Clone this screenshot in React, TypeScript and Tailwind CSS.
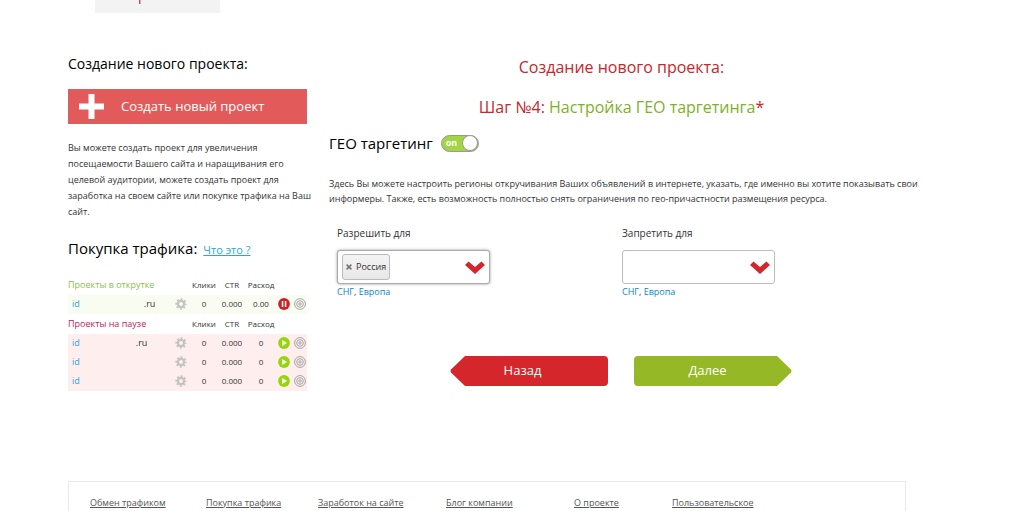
import { useState } from 'react';

type Project = { id: number; domain: string; domainClass: string; clicks: string; ctr: string; spend: string };

const ACTIVE: Project[] = [
  { id: 1, domain: '.ru', domainClass: 'pl-16', clicks: '0', ctr: '0.000', spend: '0.00' },
];

const PAUSED: Project[] = [
  { id: 2, domain: '.ru', domainClass: 'pl-14', clicks: '0', ctr: '0.000', spend: '0' },
  { id: 3, domain: '', domainClass: '', clicks: '0', ctr: '0.000', spend: '0' },
  { id: 4, domain: '', domainClass: '', clicks: '0', ctr: '0.000', spend: '0' },
];

const REGIONS = ['Россия', 'СНГ', 'Европа'];

const FOOTER_LINKS = [
  { label: 'Обмен трафиком', width: 'w-[116px]' },
  { label: 'Покупка трафика', width: 'w-[112px]' },
  { label: 'Заработок на сайте', width: 'w-32' },
  { label: 'Блог компании', width: 'w-32' },
  { label: 'О проекте', width: 'w-[98px]' },
  { label: 'Пользовательское', width: '' },
];

function GearIcon() {
  return (
    <svg viewBox="0 0 12 12" className="size-3" aria-hidden="true">
      <circle cx="6" cy="6" r="3.1" fill="none" stroke="#c3c3c3" strokeWidth="2.2" />
      <circle cx="6" cy="6" r="4.8" fill="none" stroke="#c3c3c3" strokeWidth="1.8" strokeDasharray="1.9 1.87" strokeDashoffset="0.95" />
    </svg>
  );
}

function PauseIcon() {
  return (
    <svg viewBox="0 0 12 12" className="size-3" aria-hidden="true">
      <circle cx="6" cy="6" r="5.9" fill="#cf2029" />
      <path d="M3.8 3h1.5v6H3.8zM6.8 3h1.5v6H6.8z" fill="#fff" />
    </svg>
  );
}

function PlayIcon() {
  return (
    <svg viewBox="0 0 12 12" className="size-3" aria-hidden="true">
      <circle cx="6" cy="6" r="5.9" fill="#94d60a" />
      <path d="M4.2 3 9 6 4.2 9z" fill="#fff" />
    </svg>
  );
}

function TargetIcon() {
  return (
    <svg viewBox="0 0 12 12" className="size-3" fill="none" stroke="#a3a3a3" aria-hidden="true">
      <circle cx="6" cy="6" r="5.4" />
      <circle cx="6" cy="6" r="3.3" />
      <circle cx="6" cy="6" r="1.2" />
    </svg>
  );
}

function ProjectRows({ title, titleClass, rowClass, rows, paused }: { title: string; titleClass: string; rowClass: string; rows: Project[]; paused?: boolean }) {
  return (
    <tbody>
      <tr className="h-5 text-[8px] text-[#333]">
        <th scope="colgroup" className={`text-left text-[9px] font-normal whitespace-nowrap ${titleClass}`}>{title}</th>
        <td />
        <th scope="col" className="font-normal">Клики</th>
        <th scope="col" className="font-normal">CTR</th>
        <th scope="col" className="font-normal">Расход</th>
        <td />
        <td />
      </tr>
      {rows.map((row) => (
        <tr key={row.id} className={`h-[19px] text-center text-[8px] text-[#333] ${rowClass}`}>
          <td className="pl-1 text-left text-[9px]">
            <a href="#project" className="text-[#2aa5dc]">id</a>
            <span className={row.domainClass}>{row.domain}</span>
          </td>
          <td>
            <button type="button" aria-label="Настройки" className="mx-auto block"><GearIcon /></button>
          </td>
          <td>{row.clicks}</td>
          <td>{row.ctr}</td>
          <td>{row.spend}</td>
          <td>
            <button type="button" aria-label={paused ? 'Запустить' : 'Пауза'} className="mx-auto block">{paused ? <PlayIcon /> : <PauseIcon />}</button>
          </td>
          <td>
            <button type="button" aria-label="Таргетинг" className="mx-auto block"><TargetIcon /></button>
          </td>
        </tr>
      ))}
    </tbody>
  );
}

function RegionPicker({ id, label, initial, active }: { id: string; label: string; initial: string[]; active?: boolean }) {
  const [selected, setSelected] = useState(initial);

  const add = (name: string) => {
    if (name && !selected.includes(name)) setSelected([...selected, name]);
  };

  return (
    <div className="w-[153px] text-[9px]">
      <label htmlFor={id} className="block text-[10px] leading-4 text-[#333]">{label}</label>
      <div className={`mt-[9px] flex h-[34px] items-center rounded-[3px] border bg-white pr-1 pl-1 ${active ? 'border-[#aaa] shadow-[0_0_3px_#999]' : 'border-[#bbb]'}`}>
        {selected.map((name) => (
          <span key={name} className="flex h-[26px] items-center gap-1 rounded-[3px] border border-[#bbb] bg-linear-to-b from-[#f4f4f4] to-[#e8e8e8] px-[3px] text-[#333]">
            <button type="button" aria-label={`Убрать ${name}`} onClick={() => setSelected(selected.filter((item) => item !== name))}>
              <svg viewBox="0 0 6 6" className="size-[6px]" stroke="#777" strokeWidth="1.6" aria-hidden="true"><path d="M.6.6l4.8 4.8M5.4.6L.6 5.4" /></svg>
            </button>
            {name}
          </span>
        ))}
        <select id={id} value="" onChange={(e) => add(e.target.value)} className="h-full min-w-0 flex-1 appearance-none bg-transparent outline-none">
          <option value="" />
          {REGIONS.map((name) => <option key={name}>{name}</option>)}
        </select>
        <svg viewBox="0 0 20 13" className="h-[13px] w-5 shrink-0" aria-hidden="true">
          <path d="M3.5 0.5 10 6l6.5-5.5L20 4 10 13 0 4z" fill="#d3262b" />
        </svg>
      </div>
      <p className="leading-4 text-[#333]">
        <button type="button" onClick={() => add('СНГ')} className="text-[#0b86cf]">СНГ</button>,{' '}
        <button type="button" onClick={() => add('Европа')} className="text-[#0b86cf]">Европа</button>
      </p>
    </div>
  );
}

export default function App() {
  const [geo, setGeo] = useState(true);

  return (
    <div className="bg-white pr-[110px] pl-[68px] font-['Open_Sans','Noto_Sans',sans-serif] text-[#333]">
      <nav className="flex h-[13px] items-end overflow-hidden pl-[27px]">
        <a href="#projects" className="w-[125px] bg-[#f3f3f3] pb-[8px] text-center text-sm leading-5 text-[#c2185b]">Проекты</a>
      </nav>

      <div className="flex gap-[22px] pt-10">
        <aside className="w-[239px] shrink-0">
          <h2 className="text-sm leading-[22px] text-black">Создание нового проекта:</h2>
          <button type="button" className="mt-[14px] flex h-[35px] w-full items-center border border-[#c66] bg-[#e25b5a] pl-[10px] text-[13px] text-white">
            <svg viewBox="0 0 25 25" className="size-[25px]" aria-hidden="true"><path d="M9.5 0h6v9.5H25v6h-9.5V25h-6v-9.5H0v-6h9.5z" fill="#fff" /></svg>
            <span className="pl-[17px]">Создать новый проект</span>
          </button>
          <p className="-mr-3 mt-4 text-[9px] leading-[16px]">
            Вы можете создать проект для увеличения<br />
            посещаемости Вашего сайта и наращивания его<br />
            целевой аудитории, можете создать проект для<br />
            заработка на своем сайте или покупке трафика на Ваш<br />
            сайт.
          </p>
          <div className="mt-[18px] flex items-baseline gap-[6px]">
            <h2 className="text-[15px] leading-5 text-black">Покупка трафика:</h2>
            <a href="#help" className="text-[11px] text-[#2aa5dc] underline">Что это ?</a>
          </div>
          <table className="mt-4 w-full table-fixed">
            <colgroup>
              <col className="w-[104px]" />
              <col className="w-[18px]" />
              <col className="w-7" />
              <col className="w-7" />
              <col className="w-[30px]" />
              <col className="w-4" />
              <col className="w-[15px]" />
            </colgroup>
            <ProjectRows title="Проекты в открутке" titleClass="text-[#8bbf45]" rowClass="bg-[#f9fdf1]" rows={ACTIVE} />
            <ProjectRows title="Проекты на паузе" titleClass="text-[#c2185b]" rowClass="bg-[#ffeeee]" rows={PAUSED} paused />
          </table>
        </aside>

        <main className="min-w-0 flex-1">
          <h1 className="mt-0.5 text-center text-base leading-6 text-[#c9252b]">Создание нового проекта:</h1>
          <h2 className="mt-4 text-center text-base leading-6 text-[#7fb02a]">
            <span className="text-[#c9252b]">Шаг №4:</span> Настройка ГЕО таргетинга<span className="text-[#c9252b]">*</span>
          </h2>
          <label className="mt-3 flex items-center gap-2 text-[15px] leading-6 text-black">
            ГЕО таргетинг
            <input type="checkbox" checked={geo} onChange={(e) => setGeo(e.target.checked)} className="peer sr-only" />
            <span className="flex h-[17px] w-[38px] items-center justify-between rounded-full border border-[#999] bg-[#a3d444] pl-1 text-[9px] font-bold text-white">
              {geo ? 'on' : 'off'}
              <span className="size-4 rounded-full border border-[#999] bg-white" />
            </span>
          </label>
          <p className="-mr-3 mt-[21px] text-[9px] leading-[15px]">
            Здесь Вы можете настроить регионы откручивания Ваших объявлений в интернете, указать, где именно вы хотите показывать свои информеры. Также, есть возможность полностью снять ограничения по гео-причастности размещения ресурса.
          </p>
          <div className="mt-[19px] flex gap-[132px] pl-2">
            <RegionPicker id="allow" label="Разрешить для" initial={['Россия']} active />
            <RegionPicker id="deny" label="Запретить для" initial={[]} />
          </div>
          <div className="mt-14 flex gap-[26px] pl-[121px] text-[13px] text-white">
            <button type="button" className="flex h-[30px] w-[158px]">
              <svg viewBox="0 0 15 30" className="h-[30px] w-[15px]" aria-hidden="true"><path d="M15 0 1 13.5q-1 1.5 0 3L15 30z" fill="#d5272b" /></svg>
              <span className="flex h-full flex-1 items-center justify-center rounded-r-[4px] bg-[#d5272b] pr-7">Назад</span>
            </button>
            <button type="button" className="flex h-[30px] w-[158px]">
              <span className="flex h-full flex-1 items-center justify-center rounded-l-[4px] bg-[#95b926] pl-1">Далее</span>
              <svg viewBox="0 0 15 30" className="h-[30px] w-[15px]" aria-hidden="true"><path d="M0 0 14 13.5q1 1.5 0 3L0 30z" fill="#95b926" /></svg>
            </button>
          </div>
        </main>
      </div>

      <footer className="mt-[90px] mr-2 flex h-[30px] border border-b-0 border-[#e8ece8] pt-3 pl-[21px] text-[9px] leading-[18px] text-[#555]">
        {FOOTER_LINKS.map((link) => (
          <span key={link.label} className={`whitespace-nowrap ${link.width}`}>
            <a href="#footer" className="underline">{link.label}</a>
          </span>
        ))}
      </footer>
    </div>
  );
}
